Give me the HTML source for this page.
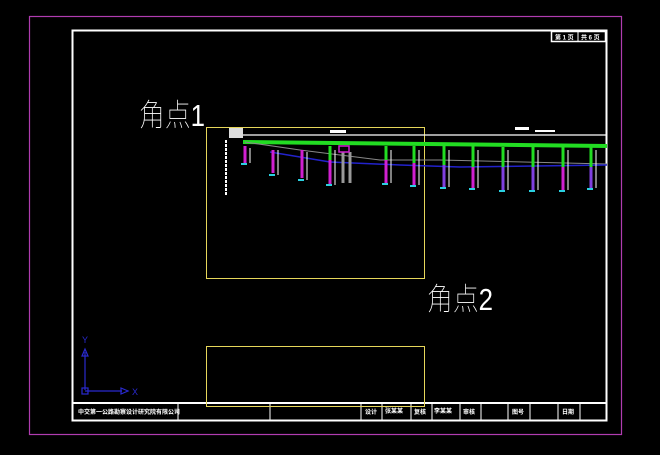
<!DOCTYPE html>
<html><head><meta charset="utf-8"><style>
html,body{margin:0;padding:0;background:#000;width:660px;height:455px;overflow:hidden}
svg{display:block}
text{font-family:"Liberation Sans","Noto Sans CJK SC",sans-serif}
</style></head><body>
<svg width="660" height="455" viewBox="0 0 660 455" xmlns="http://www.w3.org/2000/svg">
<rect x="0" y="0" width="660" height="455" fill="#000"/>
<rect x="29.5" y="16.5" width="592" height="418" fill="none" stroke="#b03cb0" stroke-width="1.2"/>
<rect x="72.5" y="30.5" width="534" height="390" fill="none" stroke="#fff" stroke-width="2"/>
<line x1="72" y1="403" x2="607" y2="403" stroke="#fff" stroke-width="2"/>
<g stroke="#fff" stroke-width="1">
<line x1="178" y1="403" x2="178" y2="420"/><line x1="270" y1="403" x2="270" y2="420"/>
<line x1="361" y1="403" x2="361" y2="420"/><line x1="382" y1="403" x2="382" y2="420"/>
<line x1="411" y1="403" x2="411" y2="420"/><line x1="432" y1="403" x2="432" y2="420"/>
<line x1="460" y1="403" x2="460" y2="420"/><line x1="481" y1="403" x2="481" y2="420"/>
<line x1="508" y1="403" x2="508" y2="420"/><line x1="530" y1="403" x2="530" y2="420"/>
<line x1="558" y1="403" x2="558" y2="420"/><line x1="580" y1="403" x2="580" y2="420"/>
</g>
<g fill="#fff" font-size="6" font-weight="bold">
<text x="78" y="414">中交第一公路勘察设计研究院有限公司</text>
<text x="365" y="414">设计</text><text x="385" y="413">张某某</text>
<text x="414" y="414">复核</text><text x="434" y="413">李某某</text>
<text x="463" y="414">审核</text><text x="512" y="414">图号</text><text x="562" y="414">日期</text>
</g>
<rect x="551.5" y="31.5" width="54" height="10" fill="none" stroke="#fff" stroke-width="1.5"/>
<line x1="578" y1="31" x2="578" y2="42" stroke="#fff"/>
<text x="555" y="39.5" fill="#fff" font-size="6" font-weight="bold">第 1 页</text>
<text x="581" y="39.5" fill="#fff" font-size="6" font-weight="bold">共 6 页</text>
<rect x="206.5" y="127.5" width="218" height="151" fill="none" stroke="#e6d65a" stroke-width="1"/>
<rect x="206.5" y="346.5" width="218" height="60" fill="none" stroke="#e6d65a" stroke-width="1"/>
<text x="139" y="126" fill="#fff" font-size="31" font-weight="100" textLength="66" lengthAdjust="spacingAndGlyphs">角点1</text>
<text x="427" y="310" fill="#fff" font-size="31" font-weight="100" textLength="66" lengthAdjust="spacingAndGlyphs">角点2</text>
<g stroke="#2a2ad0" fill="none" stroke-width="1.2">
<line x1="85" y1="390" x2="85" y2="352"/><line x1="85" y1="391" x2="122" y2="391"/>
<rect x="82" y="388" width="6" height="6"/>
<path d="M82 356 L85 349 L88 356 Z"/><path d="M121 388 L128 391 L121 394 Z"/>
</g>
<text x="82" y="343" fill="#2a2ad0" font-size="9">Y</text>
<text x="132" y="395" fill="#2a2ad0" font-size="9">X</text>
<rect x="229" y="128" width="14" height="10" fill="#ddd"/>
<line x1="226" y1="140" x2="226" y2="196" stroke="#fff" stroke-width="2" stroke-dasharray="3,1"/>
<line x1="243" y1="135" x2="607" y2="135" stroke="#fff" stroke-width="1.2"/>
<rect x="330" y="130" width="16" height="3" fill="#fff"/><rect x="515" y="127" width="14" height="3" fill="#fff"/><rect x="535" y="130" width="20" height="2" fill="#fff"/>
<path d="M243 142 L607 146" stroke="#22dd22" stroke-width="4"/>
<path d="M245 142 L300 150 L380 160 L440 160 L607 164" stroke="#888" stroke-width="1" fill="none"/>
<path d="M270 152 L330 162 L400 165 L460 167 L607 165" stroke="#2222cc" stroke-width="1.5" fill="none"/>
<g stroke-width="3">
<line x1="245" y1="146" x2="245" y2="163" stroke="#d020d0"/>
<line x1="273" y1="150" x2="273" y2="173" stroke="#d020d0"/>
<line x1="302" y1="150" x2="302" y2="178" stroke="#d020d0"/>
<line x1="330" y1="146" x2="330" y2="160" stroke="#22dd22"/><line x1="330" y1="160" x2="330" y2="184" stroke="#d020d0"/>
<line x1="386" y1="146" x2="386" y2="160" stroke="#22dd22"/><line x1="386" y1="160" x2="386" y2="183" stroke="#d020d0"/>
<line x1="414" y1="146" x2="414" y2="163" stroke="#22dd22"/><line x1="414" y1="163" x2="414" y2="185" stroke="#d020d0"/>
<line x1="444" y1="146" x2="444" y2="165" stroke="#22dd22"/><line x1="444" y1="165" x2="444" y2="187" stroke="#8040e0"/>
<line x1="473" y1="146" x2="473" y2="167" stroke="#22dd22"/><line x1="473" y1="167" x2="473" y2="188" stroke="#d020d0"/>
<line x1="503" y1="147" x2="503" y2="167" stroke="#22dd22"/><line x1="503" y1="167" x2="503" y2="190" stroke="#8040e0"/>
<line x1="533" y1="147" x2="533" y2="167" stroke="#22dd22"/><line x1="533" y1="167" x2="533" y2="190" stroke="#8040e0"/>
<line x1="563" y1="147" x2="563" y2="167" stroke="#22dd22"/><line x1="563" y1="167" x2="563" y2="190" stroke="#d020d0"/>
<line x1="591" y1="147" x2="591" y2="167" stroke="#22dd22"/><line x1="591" y1="167" x2="591" y2="188" stroke="#8040e0"/>
<line x1="343" y1="152" x2="343" y2="183" stroke="#999"/><line x1="350" y1="152" x2="350" y2="183" stroke="#999"/>
</g>
<rect x="339" y="146" width="10" height="6" fill="none" stroke="#d020d0" stroke-width="1.5"/>
<g fill="#2ad0e0">
<rect x="241" y="163" width="6" height="2"/><rect x="269" y="174" width="6" height="2"/><rect x="298" y="179" width="6" height="2"/>
<rect x="326" y="184" width="6" height="2"/><rect x="382" y="183" width="6" height="2"/><rect x="410" y="185" width="6" height="2"/>
<rect x="440" y="187" width="6" height="2"/><rect x="469" y="188" width="6" height="2"/><rect x="499" y="190" width="6" height="2"/>
<rect x="529" y="190" width="6" height="2"/><rect x="559" y="190" width="6" height="2"/><rect x="587" y="188" width="6" height="2"/>
</g>
<g stroke="#fff" stroke-width="1">
<line x1="250" y1="148" x2="250" y2="163"/><line x1="278" y1="150" x2="278" y2="175"/><line x1="307" y1="152" x2="307" y2="180"/>
<line x1="335" y1="150" x2="335" y2="185"/><line x1="391" y1="150" x2="391" y2="183"/><line x1="419" y1="150" x2="419" y2="185"/>
<line x1="449" y1="150" x2="449" y2="187"/><line x1="478" y1="150" x2="478" y2="188"/><line x1="508" y1="150" x2="508" y2="190"/>
<line x1="538" y1="150" x2="538" y2="190"/><line x1="568" y1="150" x2="568" y2="190"/><line x1="596" y1="150" x2="596" y2="188"/>
</g>
</svg>
</body></html>
